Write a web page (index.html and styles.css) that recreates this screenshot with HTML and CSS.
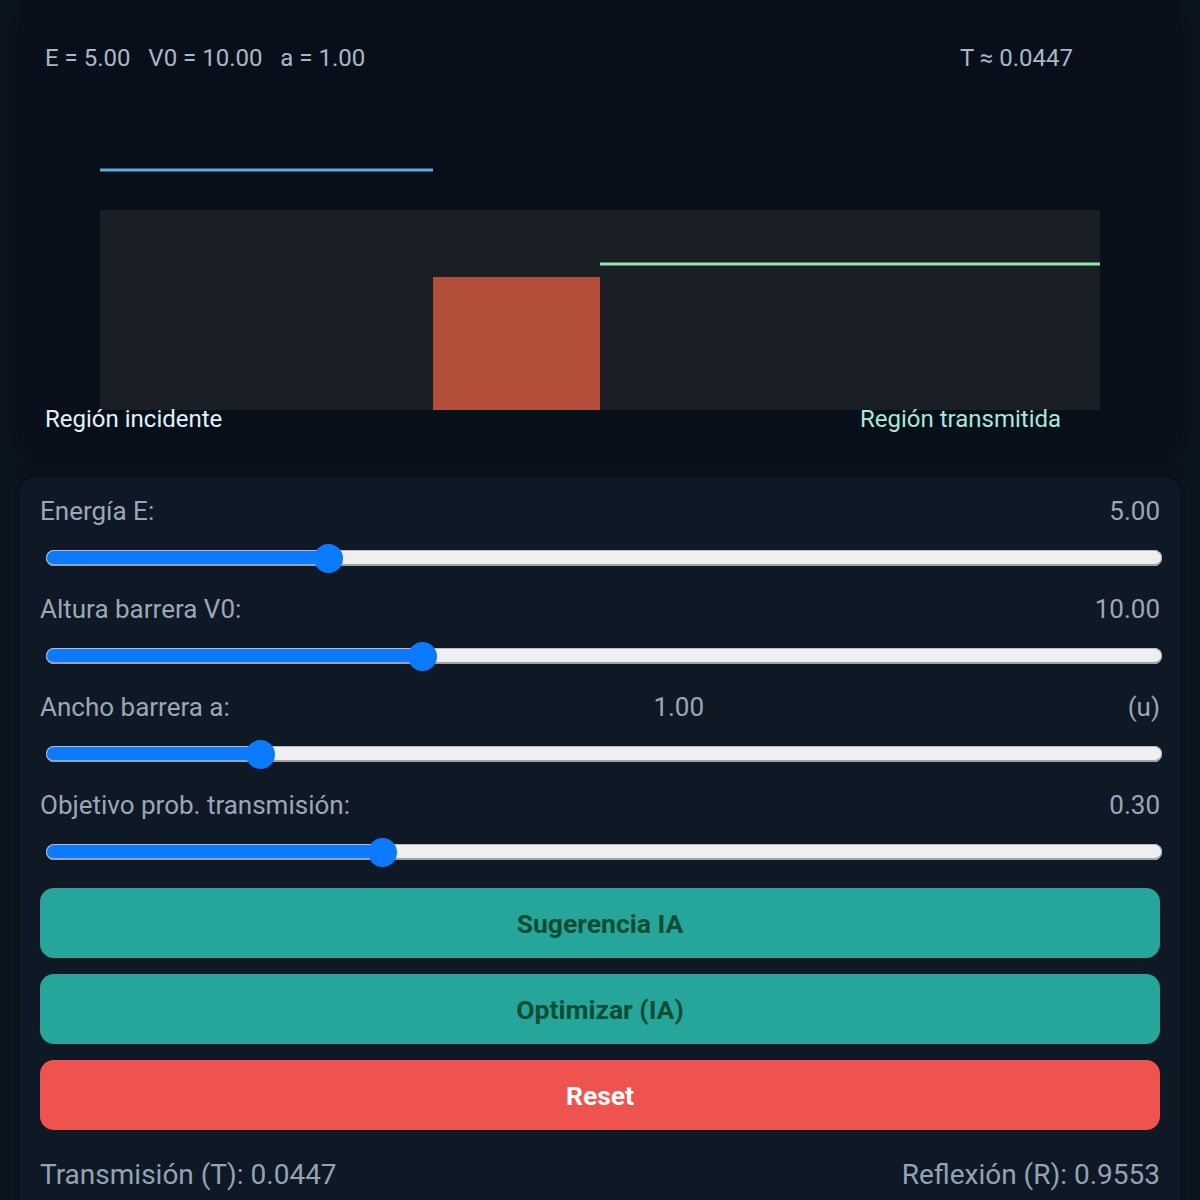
FILE: index.html
```html
<!DOCTYPE html>
<html lang="es">
<head>
    <meta charset="UTF-8">
    <meta name="viewport" content="width=device-width, initial-scale=1.0">
    <title>Barrera de potencial</title>
    <link rel="stylesheet" href="styles.css">
</head>
<body>
    <main class="app">
        <!-- Vista de la barrera -->
        <section class="scene">
            <svg class="scene-plot" viewBox="0 0 1160 450" width="1160" height="450">
                <text class="scene-info" x="25" y="66" xml:space="preserve">E = 5.00   V0 = 10.00   a = 1.00</text>
                <text class="scene-info" x="940" y="66">T ≈ 0.0447</text>

                <line class="energy-in" x1="80" y1="170" x2="413" y2="170"/>
                <rect class="plot-area" x="80" y="210" width="1000" height="200"/>
                <rect class="barrier" x="413" y="277" width="167" height="133"/>
                <line class="energy-out" x1="580" y1="264" x2="1080" y2="264"/>

                <text class="label-in" x="25" y="427">Región incidente</text>
                <text class="label-out" x="840" y="427">Región transmitida</text>
            </svg>
        </section>

        <!-- Controles -->
        <section class="controls">
            <div class="field">
                <div class="field-head">
                    <label for="energy">Energía E:</label>
                    <span>5.00</span>
                </div>
                <input type="range" id="energy" class="slider" min="0.1" max="20" step="0.01" value="5" style="--p: 0.2462">
            </div>

            <div class="field">
                <div class="field-head">
                    <label for="height">Altura barrera V0:</label>
                    <span>10.00</span>
                </div>
                <input type="range" id="height" class="slider" min="0" max="30" step="0.01" value="10" style="--p: 0.3333">
            </div>

            <div class="field">
                <div class="field-head">
                    <label for="width">Ancho barrera a:</label>
                    <span>1.00</span>
                    <span>(u)</span>
                </div>
                <input type="range" id="width" class="slider" min="0.1" max="5" step="0.01" value="1" style="--p: 0.1837">
            </div>

            <div class="field">
                <div class="field-head">
                    <label for="target">Objetivo prob. transmisión:</label>
                    <span>0.30</span>
                </div>
                <input type="range" id="target" class="slider" min="0.01" max="0.99" step="0.01" value="0.3" style="--p: 0.2959">
            </div>

            <div class="actions">
                <button class="btn btn-ai">Sugerencia IA</button>
                <button class="btn btn-ai">Optimizar (IA)</button>
                <button class="btn btn-reset">Reset</button>
            </div>

            <div class="results">
                <span>Transmisión (T): 0.0447</span>
                <span>Reflexión (R): 0.9553</span>
            </div>
        </section>
    </main>
</body>
</html>
```

FILE: styles.css
```css
body {
    margin: 0;
    background: #0b1520;
    font-family: Roboto, "Noto Sans", sans-serif;
    overflow: hidden;
}
.app {
    padding: 0 20px;
}

/* Vista */
.scene {
    height: 450px;
    background: #07101a;
    border-radius: 0 0 16px 16px;
    box-shadow: 0 8px 22px rgba(0, 0, 0, 0.45);
}
.scene-plot {
    display: block;
}
.scene-info {
    font-family: Roboto, sans-serif;
    font-size: 24px;
    fill: #a9b8c4;
}
.label-in, .label-out {
    font-family: Roboto, sans-serif;
    font-size: 24px;
}
.label-in {
    fill: #e2f3f6;
}
.label-out {
    fill: #a8e8d8;
}
.plot-area {
    fill: #1a1f26;
}
.barrier {
    fill: #b34e3a;
}
.energy-in {
    stroke: #5aaee0;
    stroke-width: 3;
}
.energy-out {
    stroke: #8ee4ad;
    stroke-width: 3;
}

/* Controles */
.controls {
    margin-top: 27px;
    background: #0e1925;
    border-radius: 16px;
    padding: 20px 20px 30px;
    box-shadow: 0 0 16px rgba(0, 0, 0, 0.35);
}
.field {
    margin-bottom: 22px;
}
.field-head {
    display: flex;
    justify-content: space-between;
    font-size: 26px;
    line-height: 28px;
    color: #9aa8b5;
    margin-bottom: 18px;
}
.slider {
    -webkit-appearance: none;
    appearance: none;
    display: block;
    width: calc(100% - 4px);
    height: 30px;
    margin: 0 0 0 6px;
    background: transparent;
}
.slider::-webkit-slider-runnable-track {
    height: 16px;
    border-radius: 8px;
    background: linear-gradient(to right,
        #0a7bff calc(14.5px + (100% - 29px) * var(--p)),
        #efefef calc(14.5px + (100% - 29px) * var(--p)));
    box-shadow: inset 0 -2px 0 #9ea3a8, inset 0 0 0 1px #b8bcc0;
}
.slider::-webkit-slider-thumb {
    -webkit-appearance: none;
    width: 29px;
    height: 29px;
    border-radius: 50%;
    background: #0a7bff;
    margin-top: -6.5px;
    border: none;
}
.actions {
    display: flex;
    flex-direction: column;
    gap: 16px;
    margin-top: -1px;
}
.btn {
    height: 70px;
    border: none;
    border-radius: 14px;
    font-family: Roboto, sans-serif;
    font-size: 26.5px;
    font-weight: 700;
    cursor: pointer;
}
.btn-ai {
    background: #26a69a;
    color: #0b4d33;
}
.btn-reset {
    background: #ef5350;
    color: #ffffff;
}
.results {
    display: flex;
    justify-content: space-between;
    margin-top: 30px;
    font-size: 28px;
    line-height: 30px;
    color: #93a3b2;
}
```
